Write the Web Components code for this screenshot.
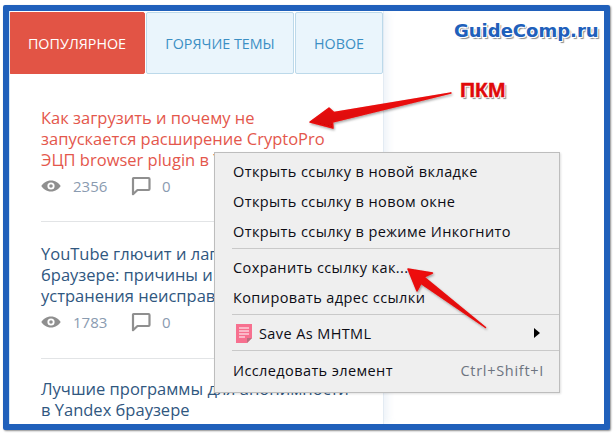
<!DOCTYPE html>
<html lang="ru">
<head>
<meta charset="utf-8">
<title>GuideComp</title>
<style>
  html, body { margin: 0; padding: 0; background: #fff; }
  body { width: 616px; height: 434px; overflow: hidden; font-family: "Open Sans", "Liberation Sans", sans-serif; }
</style>
</head>
<body>
<shot-frame>
  <side-bar>
    <tab-bar slot="tabs">
      <tab-item active style="width:136px">ПОПУЛЯРНОЕ</tab-item>
      <tab-item style="width:148px">ГОРЯЧИЕ ТЕМЫ</tab-item>
      <tab-item style="width:88px">НОВОЕ</tab-item>
    </tab-bar>
    <post-item hot views="2356" comments="0">Как загрузить и почему не<br>запускается расширение CryptoPro<br>ЭЦП browser plugin в Yandex</post-item>
    <post-item views="1783" comments="0" style="padding-bottom:25px;margin-bottom:19px">YouTube глючит и лагает в Yandex<br>браузере: причины и способы<br>устранения неисправности</post-item>
    <post-item last>Лучшие программы для анонимности<br>в Yandex браузере</post-item>
  </side-bar>
  <context-menu>
    <menu-row>Открыть ссылку в новой вкладке</menu-row>
    <menu-row>Открыть ссылку в новом окне</menu-row>
    <menu-row>Открыть ссылку в режиме Инкогнито</menu-row>
    <menu-sep></menu-sep>
    <menu-row>Сохранить ссылку как...</menu-row>
    <menu-row>Копировать адрес ссылки</menu-row>
    <menu-sep></menu-sep>
    <menu-row icon submenu>Save As MHTML</menu-row>
    <menu-sep style="margin-bottom:4px"></menu-sep>
    <menu-row hint="Ctrl+Shift+I">Исследовать элемент</menu-row>
  </context-menu>
  <shot-notes></shot-notes>
</shot-frame>

<script>
class ShotFrame extends HTMLElement {
  constructor() {
    super();
    this.shadow = this.attachShadow({ mode: 'open' });
  }

  connectedCallback() {
    this.shadow.innerHTML = /* html */`
    <style>
      :host {
        display: block;
        position: relative;
        box-sizing: border-box;
        width: 607px;
        height: 425px;
        margin: 5px 0 0 3px;
        border: 6px solid #2060bb;
        border-radius: 2px;
        background: #fff;
        box-shadow: 1px 1px 2px rgba(0, 0, 0, 0.45);
        overflow: hidden;
      }
    </style>
    <slot></slot>
    `;
  }
}

class SideBar extends HTMLElement {
  constructor() {
    super();
    this.shadow = this.attachShadow({ mode: 'open' });
  }

  connectedCallback() {
    this.shadow.innerHTML = /* html */`
    <style>
      :host {
        display: block;
        box-sizing: border-box;
        width: 375px;
        height: 413px;
        background: #fff;
        border-left: 1px solid #d5e8f6;
        border-right: 1px solid #e3ebf3;
        box-shadow: 3px 0 8px rgba(190, 210, 230, 0.3);
        overflow: hidden;
      }
      .list {
        padding: 0 24px 0 31px;
      }
    </style>
    <slot name="tabs"></slot>
    <div class="list"><slot></slot></div>
    `;
  }
}

class TabBar extends HTMLElement {
  constructor() {
    super();
    this.shadow = this.attachShadow({ mode: 'open' });
  }

  connectedCallback() {
    this.shadow.innerHTML = /* html */`
    <style>
      :host {
        display: flex;
        gap: 1px;
        height: 62px;
        margin: 1px 0 33px -1px;
      }
    </style>
    <slot></slot>
    `;
  }
}

class TabItem extends HTMLElement {
  constructor() {
    super();
    this.shadow = this.attachShadow({ mode: 'open' });
  }

  connectedCallback() {
    this.shadow.innerHTML = /* html */`
    <style>
      :host {
        display: flex;
        align-items: center;
        justify-content: center;
        box-sizing: border-box;
        flex: none;
        border: 1px solid #bcd9ea;
        border-radius: 2px;
        background: #eaf5fc;
        color: #3b8fc4;
        font-size: 14.3px;
      }
      :host([active]) {
        background: #e25445;
        border-color: #e25445;
        color: #fff;
      }
    </style>
    <slot></slot>
    `;
  }
}

class PostItem extends HTMLElement {
  constructor() {
    super();
    this.shadow = this.attachShadow({ mode: 'open' });
  }

  connectedCallback() {
    const views = this.getAttribute('views');
    const comments = this.getAttribute('comments');
    const meta = views === null ? '' : /* html */`
      <div class="meta">
        <svg class="eye" width="20" height="14" viewBox="0 0 20 14">
          <path fill="#8f8f8f" fill-rule="evenodd" d="M10 1.500C5.600 1.500 2 4.200.3 7c1.700 2.800 5.300 5.500 9.700 5.500s8-2.700 9.700-5.500C18 4.200 14.400 1.500 10 1.500zM10 3.400a3.600 3.600 0 1 1 0 7.200 3.600 3.600 0 0 1 0-7.200zM10 5.200a1.800 1.800 0 1 0 0 3.600 1.800 1.800 0 0 0 0-3.600z"/>
        </svg>
        <span class="views">${views}</span>
        <svg class="bubble" width="20" height="20" viewBox="0 0 20 20">
          <path fill="none" stroke="#8f8f8f" stroke-width="2.200" stroke-linejoin="round" d="M2.500 2h15a1 1 0 0 1 1 1v10a1 1 0 0 1-1 1H6.500L2 18.200V2.500a.5.500 0 0 1 .5-.5z"/>
        </svg>
        <span class="comments">${comments}</span>
      </div>`;

    this.shadow.innerHTML = /* html */`
    <style>
      :host {
        display: block;
        padding-bottom: 24px;
        margin-bottom: 21px;
        border-bottom: 1px solid #e2e4e6;
        font-size: 16.5px;
        line-height: 21px;
        color: #30577f;
      }
      :host([hot]) {
        color: #e4574c;
      }
      :host([last]) {
        border-bottom: none;
        margin-bottom: 0;
        padding-bottom: 0;
      }
      .title {
        white-space: nowrap;
      }
      .meta {
        display: flex;
        align-items: center;
        height: 22px;
        margin-top: 5px;
        font-size: 15px;
        color: #8a9bb0;
      }
      .eye {
        margin-right: 12px;
      }
      .views {
        width: 48px;
      }
      .bubble {
        margin: 0 11px 0 10px;
      }
    </style>
    <div class="title"><slot></slot></div>
    ${meta}
    `;
  }
}

class ContextMenu extends HTMLElement {
  constructor() {
    super();
    this.shadow = this.attachShadow({ mode: 'open' });
  }

  connectedCallback() {
    this.shadow.innerHTML = /* html */`
    <style>
      :host {
        position: absolute;
        left: 205px;
        top: 141px;
        box-sizing: border-box;
        display: block;
        width: 346px;
        height: 241px;
        padding: 3px 0;
        background: #efefef;
        border: 1px solid #bdbdbd;
        box-shadow: 1px 1px 2px rgba(0, 0, 0, 0.12);
        color: #0c0c14;
        font-size: 14.5px;
      }
    </style>
    <slot></slot>
    `;
  }
}

class MenuRow extends HTMLElement {
  constructor() {
    super();
    this.shadow = this.attachShadow({ mode: 'open' });
  }

  connectedCallback() {
    const hint = this.getAttribute('hint');
    const icon = this.hasAttribute('icon') ? /* html */`
      <svg class="icon" width="16" height="21" viewBox="0 0 16 21">
        <path fill="#f7708f" d="M0 1h16v14l-5 5H0z"/>
        <path fill="#b9707f" d="M11 20v-5h5z"/>
        <path fill="none" stroke="#fff" stroke-width="1.200" d="M3 5h10M3 8h10M3 11h10M3 14h6"/>
      </svg>` : '';
    const arrow = this.hasAttribute('submenu') ? '<span class="sub"></span>' : '';
    const right = hint ? `<span class="hint">${hint}</span>` : '';

    this.shadow.innerHTML = /* html */`
    <style>
      :host {
        display: flex;
        align-items: center;
        height: 30px;
        padding: 0 15px 0 18px;
        letter-spacing: 0.4px;
        white-space: nowrap;
      }
      .icon {
        margin: 0 7px 0 3px;
      }
      .label {
        flex: 1;
      }
      .hint {
        color: #6d7480;
        letter-spacing: 0.7px;
      }
      .sub {
        width: 0;
        height: 0;
        border-left: 6px solid #000;
        border-top: 5px solid transparent;
        border-bottom: 5px solid transparent;
        margin-right: 4px;
      }
    </style>
    ${icon}<span class="label"><slot></slot></span>${right}${arrow}
    `;
  }
}

class MenuSep extends HTMLElement {
  constructor() {
    super();
    this.shadow = this.attachShadow({ mode: 'open' });
  }

  connectedCallback() {
    this.shadow.innerHTML = /* html */`
    <style>
      :host {
        display: block;
        height: 1px;
        margin: 2px 0 3px 17px;
        background: #c9c9c9;
      }
    </style>
    `;
  }
}

// logo, label and the two red arrows drawn over the screenshot
class ShotNotes extends HTMLElement {
  constructor() {
    super();
    this.shadow = this.attachShadow({ mode: 'open' });
  }

  connectedCallback() {
    this.shadow.innerHTML = /* html */`
    <style>
      :host {
        position: absolute;
        inset: 0;
        display: block;
        pointer-events: none;
      }
      .logo, .pkm {
        position: absolute;
        font-weight: bold;
        white-space: nowrap;
      }
      .logo {
        left: 445px;
        top: 8px;
        font-family: "DejaVu Sans", sans-serif;
        font-size: 18px;
        line-height: 24px;
        color: #2060bb;
        text-shadow: 1px 1px 0 #fff, -1px -1px 0 #fff, 1px -1px 0 #fff, -1px 1px 0 #fff, 2px 2px 1px #8a8a8a;
      }
      .pkm {
        left: 451px;
        top: 67px;
        font-family: "Liberation Sans", sans-serif;
        font-size: 21px;
        line-height: 24px;
        color: #e00a0a;
        -webkit-text-stroke: 0.4px #e00a0a;
        text-shadow: 1px 1px 0 #fff, -1px -1px 0 #fff, 1px -1px 0 #fff, -1px 1px 0 #fff, 2px 2px 1px #8a8a8a;
      }
      svg {
        position: absolute;
        left: 0;
        top: 0;
        overflow: visible;
      }
    </style>
    <div class="logo">GuideComp.ru</div>
    <div class="pkm">ПКМ</div>
    <svg width="595" height="413" viewBox="9 11 595 413">
      <defs>
        <filter id="soft" x="-20%" y="-20%" width="140%" height="140%">
          <feDropShadow dx="1" dy="1.500" stdDeviation="1.200" flood-color="#000" flood-opacity="0.35"/>
        </filter>
        <linearGradient id="red" x1="0" y1="0" x2="0" y2="1">
          <stop offset="0" stop-color="#f01010"/>
          <stop offset="1" stop-color="#d80606"/>
        </linearGradient>
      </defs>
      <g filter="url(#soft)" fill="url(#red)" stroke="#e80a0a" stroke-width="1.500" stroke-linejoin="round">
        <path d="M451 93 L334 112.500 L329 108 L310 122 L333 128 L332.500 122 Z"/>
        <path d="M485.500 327.500 L424 277 L432.500 273 L408 269 L417 291 L421 283.500 Z"/>
      </g>
    </svg>
    `;
  }
}

customElements.define('shot-frame', ShotFrame);
customElements.define('side-bar', SideBar);
customElements.define('tab-bar', TabBar);
customElements.define('tab-item', TabItem);
customElements.define('post-item', PostItem);
customElements.define('context-menu', ContextMenu);
customElements.define('menu-row', MenuRow);
customElements.define('menu-sep', MenuSep);
customElements.define('shot-notes', ShotNotes);
</script>
</body>
</html>
